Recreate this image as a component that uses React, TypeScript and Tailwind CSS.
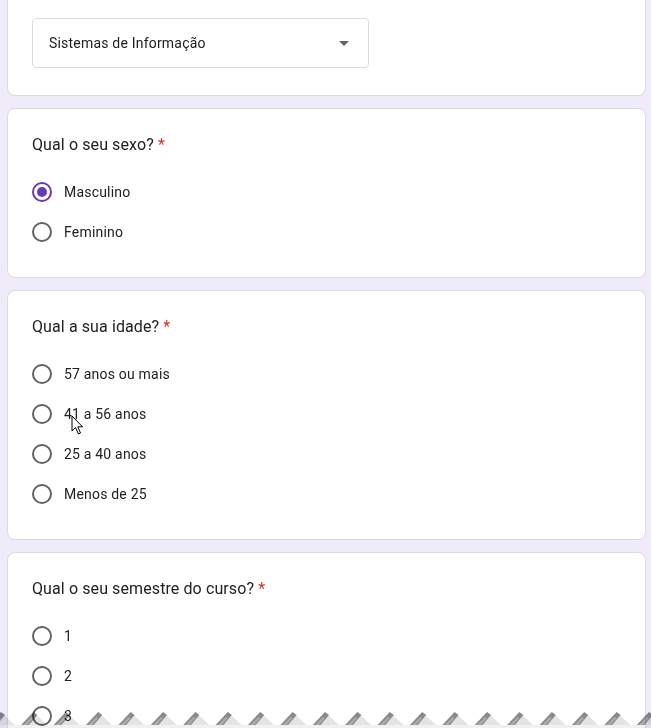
import React from "react";

const sans = { fontFamily: "Roboto, 'Liberation Sans', Arial, sans-serif" };

function Radio({ checked }: { checked?: boolean }) {
  return (
    <span
      className={`flex h-5 w-5 shrink-0 items-center justify-center rounded-full border-2 ${
        checked ? "border-[#673ab7]" : "border-[#5f6368]"
      }`}
    >
      {checked && <span className="h-[10px] w-[10px] rounded-full bg-[#673ab7]" />}
    </span>
  );
}

function Question({
  title,
  options,
  selected,
}: {
  title: string;
  options: string[];
  selected?: number;
}) {
  return (
    <div className="rounded-lg border border-[#dadce0] bg-white px-6 pt-6 pb-[25px]">
      <div className="h-6 text-[16px] leading-6 tracking-[0.1px] text-[#202124]">
        {title} <span className="text-[#d93025]">*</span>
      </div>
      <div className="mt-[15px] flex flex-col">
        {options.map((o, i) => (
          <div key={o} className="flex h-10 items-center gap-3">
            <Radio checked={selected === i} />
            <span className="text-[14px] tracking-[0.2px] text-[#202124]">{o}</span>
          </div>
        ))}
      </div>
    </div>
  );
}

function Cursor() {
  return (
    <svg
      className="absolute left-[71px] top-[415px]"
      width="14"
      height="21"
      viewBox="0 0 14 21"
    >
      <path
        d="M1 1 L1 16 L4.5 12.5 L7.5 19 L9.5 18 L6.8 11.8 L11.5 11.8 Z"
        fill="#fff"
        stroke="#000"
        strokeWidth="1"
        strokeLinejoin="round"
      />
    </svg>
  );
}

function TornEdge() {
  const period = 32.4;
  const teeth = Array.from({ length: 22 }, (_, i) => -31.4 + i * period);
  return (
    <svg
      className="absolute bottom-0 left-0 mix-blend-multiply"
      width="651"
      height="17"
      viewBox="0 0 651 17"
    >
      {teeth.map((x, i) => {
        const p = x + period; // peak x
        return (
          <g key={i}>
            <polygon points={`${p - 15},17 ${p},1 ${p + 17},17`} fill="#e4e4e4" />
            <polygon
              points={`${p - 15},17 ${p},1 ${p + 4},4 ${p - 7},17`}
              fill="#8a8a8a"
            />
            <polygon
              points={`${p - 10},14 ${p - 2},6 ${p},7 ${p - 7},15`}
              fill="#ababab"
            />
          </g>
        );
      })}
      <rect x="0" y="14" width="651" height="3" fill="#f1f1f1" />
    </svg>
  );
}

export default function App() {
  return (
    <div
      className="relative isolate h-[728px] w-[651px] overflow-hidden bg-[#f0ebf8]"
      style={sans}
    >
      <div className="ml-[7px] mr-[5px] flex flex-col gap-3">
        <div className="rounded-b-lg border border-t-0 border-[#dadce0] bg-white px-6 pt-[18px] pb-[27px]">
          <div className="flex h-[50px] w-[337px] items-center justify-between rounded border border-[#dadce0] pl-4 pr-[19px]">
            <span className="text-[14px] tracking-[0.2px] text-[#202124]">
              Sistemas de Informação
            </span>
            <span className="h-0 w-0 border-x-[5px] border-t-[5px] border-x-transparent border-t-[#5f6368]" />
          </div>
        </div>
        <Question title="Qual o seu sexo?" options={["Masculino", "Feminino"]} selected={0} />
        <Question
          title="Qual a sua idade?"
          options={["57 anos ou mais", "41 a 56 anos", "25 a 40 anos", "Menos de 25"]}
        />
        <Question
          title="Qual o seu semestre do curso?"
          options={["1", "2", "3", "4", "5"]}
        />
      </div>
      <Cursor />
      <TornEdge />
    </div>
  );
}
